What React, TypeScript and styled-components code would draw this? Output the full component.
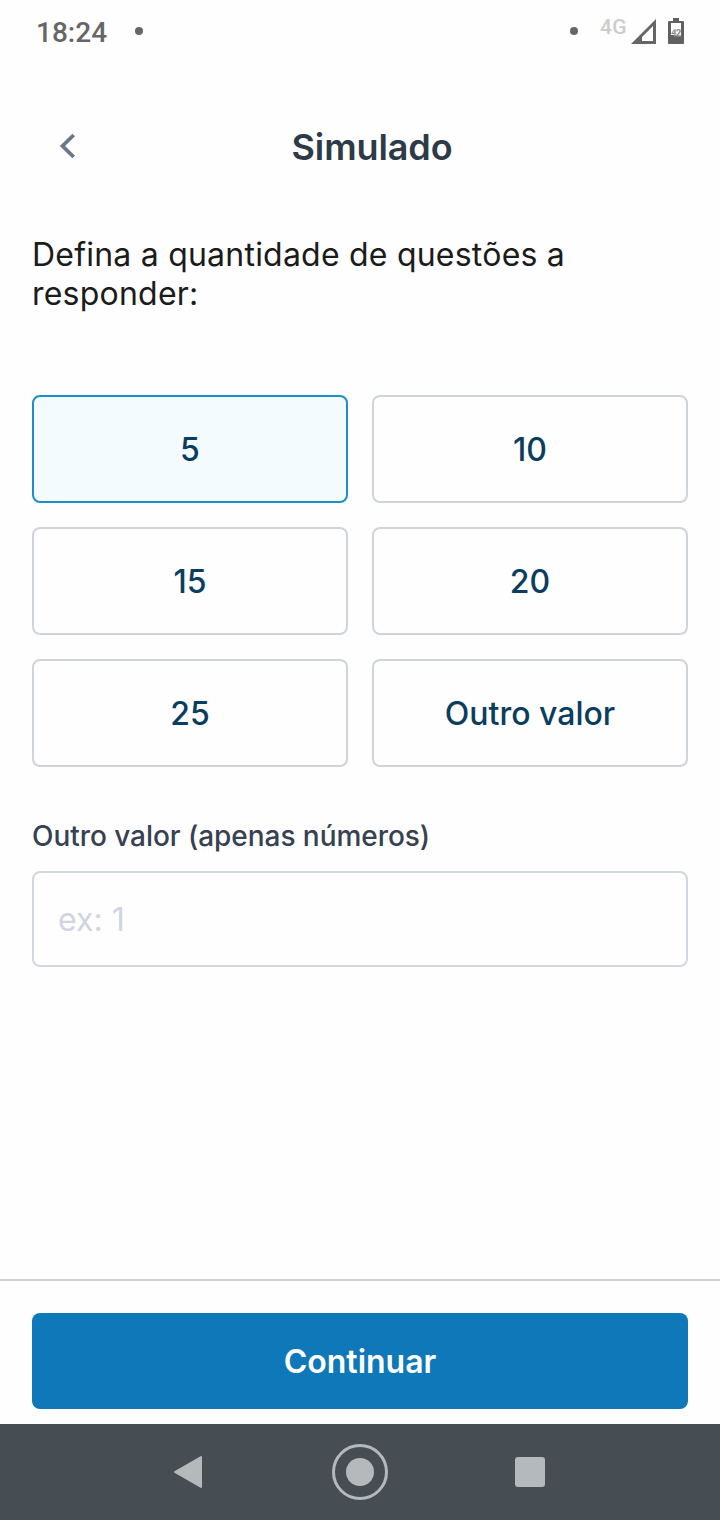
import React, { useState } from 'react';
import styled, { createGlobalStyle } from 'styled-components';

const GlobalStyle = createGlobalStyle`
  * { box-sizing: border-box; }
  body { margin: 0; background: #fefefe; }
  button, input { font: inherit; }
`;
const Screen = styled.div`
  width: 720px;
  height: 1520px;
  display: flex;
  flex-direction: column;
  background: #fefefe;
  font-family: Inter, sans-serif;
`;
const StatusBar = styled.div`
  height: 64px;
  display: flex;
  align-items: center;
  padding: 0 34px 2px 36px;
  font: 500 28px/32px Roboto, sans-serif;
  color: #666;
`;
const Clock = styled.span`
  width: 71px;
  padding-top: 3px;
`;
const Dot = styled.span`
  width: 8px;
  height: 8px;
  border-radius: 50%;
  background: #666;
  margin-left: 28px;
`;
const StatusIcons = styled.div`
  display: flex;
  align-items: center;
  margin-left: auto;
`;
const Network = styled.span`
  font: 500 21px/24px Roboto, sans-serif;
  letter-spacing: 0.4px;
  color: #ccc;
  margin: 0 3px 8px 22px;
`;
const Header = styled.header`
  height: 164px;
  display: grid;
  grid-template-columns: 104px 1fr 80px;
  align-items: center;
`;
const Back = styled.button`
  border: 0;
  background: none;
  padding: 0 0 0 58px;
  display: flex;
`;
const Title = styled.h1`
  margin: 2px 0 0;
  text-align: center;
  font-size: 36px;
  line-height: 44px;
  letter-spacing: -0.1px;
  font-weight: 600;
  color: #2d3b49;
`;
const Main = styled.main`
  flex: 1;
  padding: 7px 32px 0;
`;
const Question = styled.p`
  margin: 0;
  font-size: 32px;
  line-height: 39px;
  letter-spacing: 0.22px;
  color: #1b1b1b;
`;
const Options = styled.div`
  display: grid;
  grid-template-columns: 1fr 1fr;
  gap: 24px;
  margin-top: 82px;
`;
const Option = styled.button<{ $selected: boolean }>`
  height: 108px;
  padding: 0;
  border: 2px solid ${p => (p.$selected ? '#1b8fca' : '#cfd4da')};
  border-radius: 8px;
  background: ${p => (p.$selected ? '#f3fbff' : '#fefefe')};
  color: #0b3d5e;
  font-size: 32px;
  font-weight: 500;
`;
const Label = styled.label`
  display: block;
  margin-top: 52px;
  font-size: 28px;
  line-height: 34px;
  letter-spacing: -0.05px;
  font-weight: 500;
  color: #364152;
`;
const Field = styled.input`
  display: block;
  width: 100%;
  height: 96px;
  margin-top: 18px;
  padding: 0 24px;
  border: 2px solid #d2d6df;
  border-radius: 8px;
  background: #fefefe;
  font-size: 32px;
  outline: 0;
  &::placeholder { color: #cfd6e1; opacity: 1; }
`;
const Footer = styled.footer`
  height: 145px;
  border-top: 2px solid #d2d2d4;
  padding: 32px 32px 0;
`;
const Continue = styled.button`
  width: 100%;
  height: 96px;
  padding: 0;
  border: 0;
  border-radius: 8px;
  background: #0f78b8;
  color: #fff;
  font-size: 32px;
  font-weight: 600;
`;
const NavBar = styled.nav`
  height: 96px;
  background: #464d53;
  svg { display: block; }
`;

const options = ['5', '10', '15', '20', '25', 'Outro valor'];

export default function App() {
  const [selected, setSelected] = useState('5');
  return (
    <Screen>
      <GlobalStyle />
      <StatusBar>
        <Clock>18:24</Clock>
        <Dot />
        <StatusIcons>
          <Dot />
          <Network>4G</Network>
          <svg width="56" height="32" viewBox="630 15 56 32">
            <path d="M631 44 656 19V44ZM642 41H653V26L642 37Z" fill="#666" fillRule="evenodd" />
            <path d="M673 18h6v3h4q1 0 1 1v21q0 1-1 1h-14q-1 0-1-1v-21q0-1 1-1h4z" fill="#606060" />
            <path d="M671 23h10v12h-10z" fill="#fefefe" />
            <text x="676" y="36" textAnchor="middle" fontSize="9" fontWeight="700" fill="#606060" stroke="#ddd" strokeWidth="0.3" letterSpacing="-0.3">42</text>
          </svg>
        </StatusIcons>
      </StatusBar>
      <Header>
        <Back aria-label="Voltar">
          <svg width="20" height="28" viewBox="0 0 20 28" fill="none" stroke="#6b7689" strokeWidth="3.8">
            <path d="M15.7 3 4.5 14l11.2 11" />
          </svg>
        </Back>
        <Title>Simulado</Title>
      </Header>
      <Main>
        <Question>Defina a quantidade de questões a responder:</Question>
        <Options>
          {options.map(o => (
            <Option key={o} $selected={o === selected} onClick={() => setSelected(o)}>{o}</Option>
          ))}
        </Options>
        <Label htmlFor="valor">Outro valor (apenas números)</Label>
        <Field id="valor" inputMode="numeric" placeholder="ex: 1" />
      </Main>
      <Footer><Continue>Continuar</Continue></Footer>
      <NavBar>
        <svg width="720" height="96" viewBox="0 0 720 96" fill="#b5b9bb">
          <path d="M175 48 201 33V63Z" stroke="#b5b9bb" strokeWidth="2" strokeLinejoin="round" />
          <circle cx="360" cy="48" r="26.5" fill="none" stroke="#b5b9bb" strokeWidth="3" />
          <circle cx="360" cy="48" r="14" />
          <rect x="515" y="33" width="30" height="30" rx="3" />
        </svg>
      </NavBar>
    </Screen>
  );
}
